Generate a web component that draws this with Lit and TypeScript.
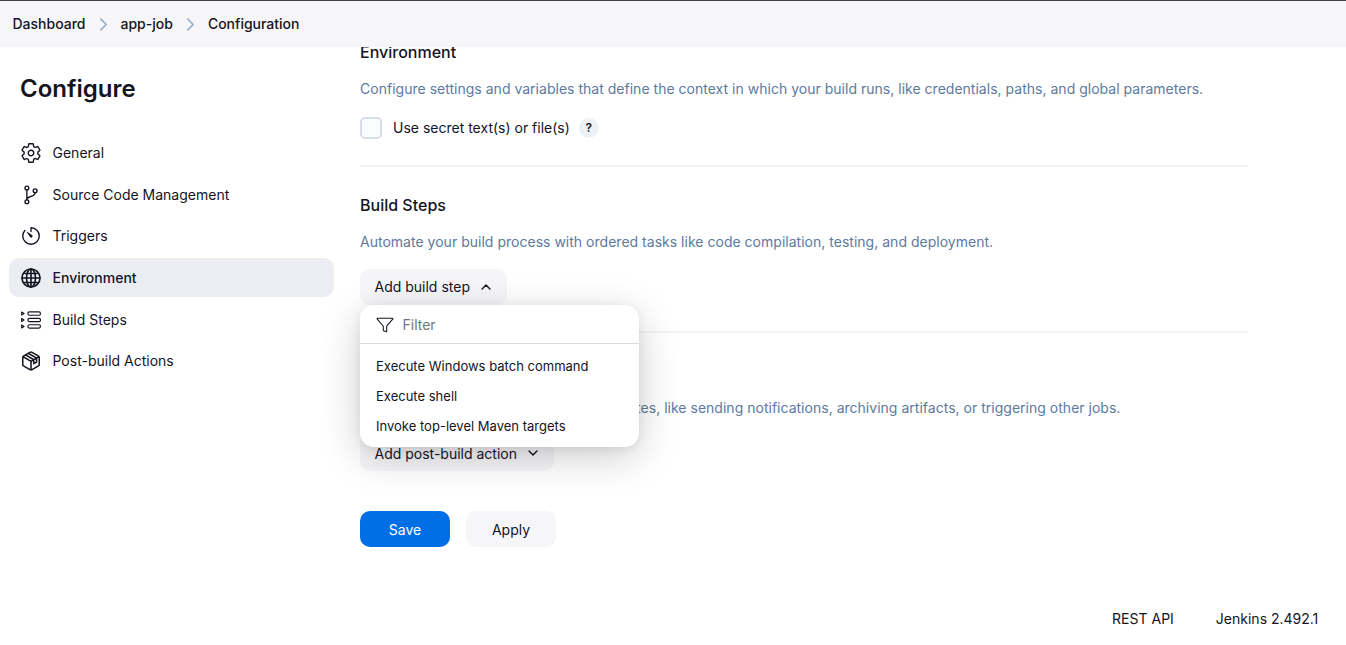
import { LitElement, html, css, svg } from "lit";
import { customElement } from "lit/decorators.js";
import { classMap } from "lit/directives/class-map.js";

const icons: Record<string, unknown> = {
  gear: svg`<path d="M262.29 192.31a64 64 0 1057.4 57.4 64.13 64.13 0 00-57.4-57.4zM416.39 256a154.34 154.34 0 01-1.53 20.79l45.21 35.46a10.81 10.81 0 012.45 13.75l-42.77 74a10.81 10.81 0 01-13.14 4.59l-44.9-18.08a16.11 16.11 0 00-15.17 1.75A164.48 164.48 0 01325 400.8a15.94 15.94 0 00-8.82 12.14l-6.73 47.89a11.08 11.08 0 01-10.68 9.17h-85.54a11.11 11.11 0 01-10.69-8.87l-6.72-47.82a16.07 16.07 0 00-9-12.22 155.3 155.3 0 01-21.46-12.57 16 16 0 00-15.11-1.71l-44.89 18.07a10.81 10.81 0 01-13.14-4.58l-42.77-74a10.8 10.8 0 012.45-13.75l38.21-30a16.05 16.05 0 006-14.08c-.36-4.17-.58-8.33-.58-12.5s.21-8.27.58-12.35a16 16 0 00-6.07-13.94l-38.19-30A10.81 10.81 0 0149.48 186l42.77-74a10.81 10.81 0 0113.14-4.59l44.9 18.08a16.11 16.11 0 0015.17-1.75A164.48 164.48 0 01187 111.2a15.94 15.94 0 008.82-12.14l6.73-47.89A11.08 11.08 0 01213.23 42h85.54a11.11 11.11 0 0110.69 8.87l6.72 47.82a16.07 16.07 0 009 12.22 155.3 155.3 0 0121.46 12.57 16 16 0 0015.11 1.71l44.89-18.07a10.81 10.81 0 0113.14 4.58l42.77 74a10.8 10.8 0 01-2.45 13.75l-38.21 30a16.05 16.05 0 00-6.05 14.08c.33 4.14.55 8.3.55 12.47z"/>`,
  branch: svg`<circle cx="160" cy="92" r="44"/><circle cx="160" cy="412" r="44"/><circle cx="352" cy="156" r="44"/><path d="M160 368V136M352 200c0 122-192 62-192 168"/>`,
  timer: svg`<path d="M112.91 128A191.85 191.85 0 0064 254c-1.18 106.35 85.65 193.8 192 194 106.2.2 192-85.83 192-192 0-104.54-83.55-189.61-187.5-192a4.36 4.36 0 00-4.5 4.37V152"/><path class="fill" d="M233.38 278.63l-79-113a8.13 8.13 0 0111.32-11.32l113 79a32.5 32.5 0 01-37.25 53.26 33.21 33.21 0 01-8.07-7.94z"/>`,
  globe: svg`<g stroke-width="38"><circle cx="256" cy="256" r="210"/><ellipse cx="256" cy="256" rx="104" ry="210"/><path d="M256 48v416M464 256H48M112 150h288M112 362h288"/></g>`,
  steps: svg`<g stroke-width="27"><rect x="184" y="67" width="292" height="78" rx="36"/><rect x="184" y="217" width="292" height="78" rx="36"/><rect x="184" y="367" width="292" height="78" rx="36"/><path d="M38 72v68l56-34zM38 222v68l56-34zM38 372v68l56-34z"/></g>`,
  box: svg`<g stroke-width="36"><path d="M448 341.400V170.600a32 32 0 00-15.900-27.700l-152-88.500a48 48 0 00-48.200 0l-152 88.500A32 32 0 0064 170.600v170.800a32 32 0 0015.900 27.700l152 88.500a48 48 0 0048.200 0l152-88.500a32 32 0 0015.900-27.700zM69 153l187 111 187-111M256 463V264M128 112l194 114v92l64-36v-92L192 76"/></g>`,
  filter: svg`<path d="M35.400 87.120l168.650 196.440A16.070 16.070 0 01208 294v119.320a7.930 7.930 0 005.390 7.590l80.150 26.670A7.940 7.940 0 00304 440V294a16.070 16.070 0 014-10.440L476.600 87.120A14 14 0 00466 64H46.050A14 14 0 0035.400 87.120z"/>`,
  right: svg`<path d="M184 112l144 144-144 144"/>`,
  up: svg`<path d="M112 328l144-144 144 144"/>`,
  down: svg`<path d="M112 184l144 144 144-144"/>`,
};

const icon = (name: string, cls = "") =>
  html`<svg class="icon ${cls}" viewBox="0 0 512 512">${icons[name]}</svg>`;

const NAV = [
  ["gear", "General"],
  ["branch", "Source Code Management"],
  ["timer", "Triggers"],
  ["globe", "Environment"],
  ["steps", "Build Steps"],
  ["box", "Post-build Actions"],
];

const STEPS = ["Execute Windows batch command", "Execute shell", "Invoke top-level Maven targets"];

@customElement("app-root")
export class AppRoot extends LitElement {
  static styles = css`
    :host { display: block; height: 645px; overflow: hidden; background: #fff; color: #14141f; font: 400 14px/20px Inter, sans-serif; }
    * { box-sizing: border-box; }
    .icon { display: block; flex: none; width: 22px; height: 22px; fill: none; stroke: currentColor; stroke-width: 32; stroke-linecap: round; stroke-linejoin: round; }
    .icon .fill { fill: currentColor; stroke: none; }
    .crumbs { position: relative; z-index: 2; display: flex; align-items: center; height: 47px; padding: 0 12.500px; border-top: 1px solid #404045; background: #f6f6f9; font-weight: 500; }
    .icon.sep { width: 19px; height: 19px; margin: 0 8px; color: #95a9c8; stroke-width: 42; }
    .body { display: grid; grid-template-columns: 325px 888px; column-gap: 26px; padding-left: 9px; height: 545px; }
    .title { margin: 0; padding: 27px 0 0 11px; font-weight: 600; font-size: 24px; line-height: 30px; }
    .nav { display: grid; row-gap: 2.670px; margin-top: 29.450px; }
    .item { display: flex; align-items: center; gap: 10.500px; height: 39px; padding-left: 11px; border-radius: 10px; }
    .item.active { background: #ecedf3; font-weight: 500; }
    .head { margin: 0; font-weight: 500; font-size: 16px; line-height: 24px; }
    .desc { margin: 14px 0 0; color: #5d7a9e; line-height: 22px; letter-spacing: .016px; white-space: nowrap; }
    .section { border-bottom: 2px solid #f2f2f7; }
    .env { height: 127px; margin-top: -7px; }
    .steps { height: 166px; padding-top: 26px; }
    .post { height: 138px; padding-top: 26px; border: 0; }
    .check { display: flex; align-items: center; margin-top: 17px; }
    .square { width: 22px; height: 22px; margin-right: 11px; border: 2px solid #d9dde9; border-radius: 5px; background: #fbfcfd; }
    .help { display: grid; place-items: center; width: 20px; height: 20px; margin-left: 9px; border-radius: 50%; background: #edf0f4; font-weight: 600; font-size: 12px; }
    .anchor { position: relative; width: max-content; margin-top: 16px; }
    .btn { display: flex; align-items: center; justify-content: center; height: 36px; padding: 0 14px 0 14.500px; border: 0; border-radius: 10px; background: #f6f6f9; color: inherit; font: inherit; }
    .icon.chev { width: 14px; height: 14px; margin-left: 9px; stroke-width: 52; }
    .post .btn { padding-top: 1px; }
    .post .chev { margin-bottom: 2px; }
    .menu { position: absolute; z-index: 1; top: 36px; left: 0; width: 279px; height: 142px; border-radius: 14px; background: #fff; box-shadow: 0 10px 40px rgba(0, 0, 0, .2), 0 2px 10px rgba(0, 0, 30, .07); }
    .filter { display: flex; align-items: center; gap: 8.500px; height: 39px; padding: 1px 0 0 16px; border-bottom: 1px solid #d9d9e0; color: #757575; }
    .icon.funnel { width: 18px; height: 18px; color: #14141f; stroke-width: 30; }
    .list { padding-top: 7px; font-size: 13px; letter-spacing: .01px; }
    .option { padding: 5px 16px; }
    .actions { display: flex; gap: 16px; margin-top: 40px; }
    .wide { width: 90px; padding: 2px 0 0; }
    .primary { background: #006fe6; color: #fff; }
    .foot { display: flex; justify-content: flex-end; gap: 42px; padding: 17px 27.700px 0 0; }
  `;

  render() {
    return html`
      <header class="crumbs"><span>Dashboard</span>${icon("right", "sep")}<span>app-job</span>${icon("right", "sep")}<span>Configuration</span></header>
      <div class="body">
        <aside>
          <h1 class="title">Configure</h1>
          <nav class="nav">
            ${NAV.map(([glyph, label]) => html`<div class=${classMap({ item: true, active: label === "Environment" })}>${icon(glyph)}<span>${label}</span></div>`)}
          </nav>
        </aside>
        <main>
          <section class="section env">
            <h2 class="head">Environment</h2>
            <p class="desc">Configure settings and variables that define the context in which your build runs, like credentials, paths, and global parameters.</p>
            <div class="check"><span class="square"></span><span>Use secret text(s) or file(s)</span><span class="help">?</span></div>
          </section>
          <section class="section steps">
            <h2 class="head">Build Steps</h2>
            <p class="desc">Automate your build process with ordered tasks like code compilation, testing, and deployment.</p>
            <div class="anchor">
              <button class="btn">Add build step${icon("up", "chev")}</button>
              <div class="menu">
                <div class="filter">${icon("filter", "funnel")}<span>Filter</span></div>
                <div class="list">${STEPS.map((s) => html`<div class="option">${s}</div>`)}</div>
              </div>
            </div>
          </section>
          <section class="section post">
            <h2 class="head">Post-build Actions</h2>
            <p class="desc">Define what happens after a build completes, like sending notifications, archiving artifacts, or triggering other jobs.</p>
            <div class="anchor"><button class="btn">Add post-build action${icon("down", "chev")}</button></div>
          </section>
          <div class="actions"><button class="btn wide primary">Save</button><button class="btn wide">Apply</button></div>
        </main>
      </div>
      <footer class="foot"><span>REST API</span><span>Jenkins 2.492.1</span></footer>
    `;
  }
}
